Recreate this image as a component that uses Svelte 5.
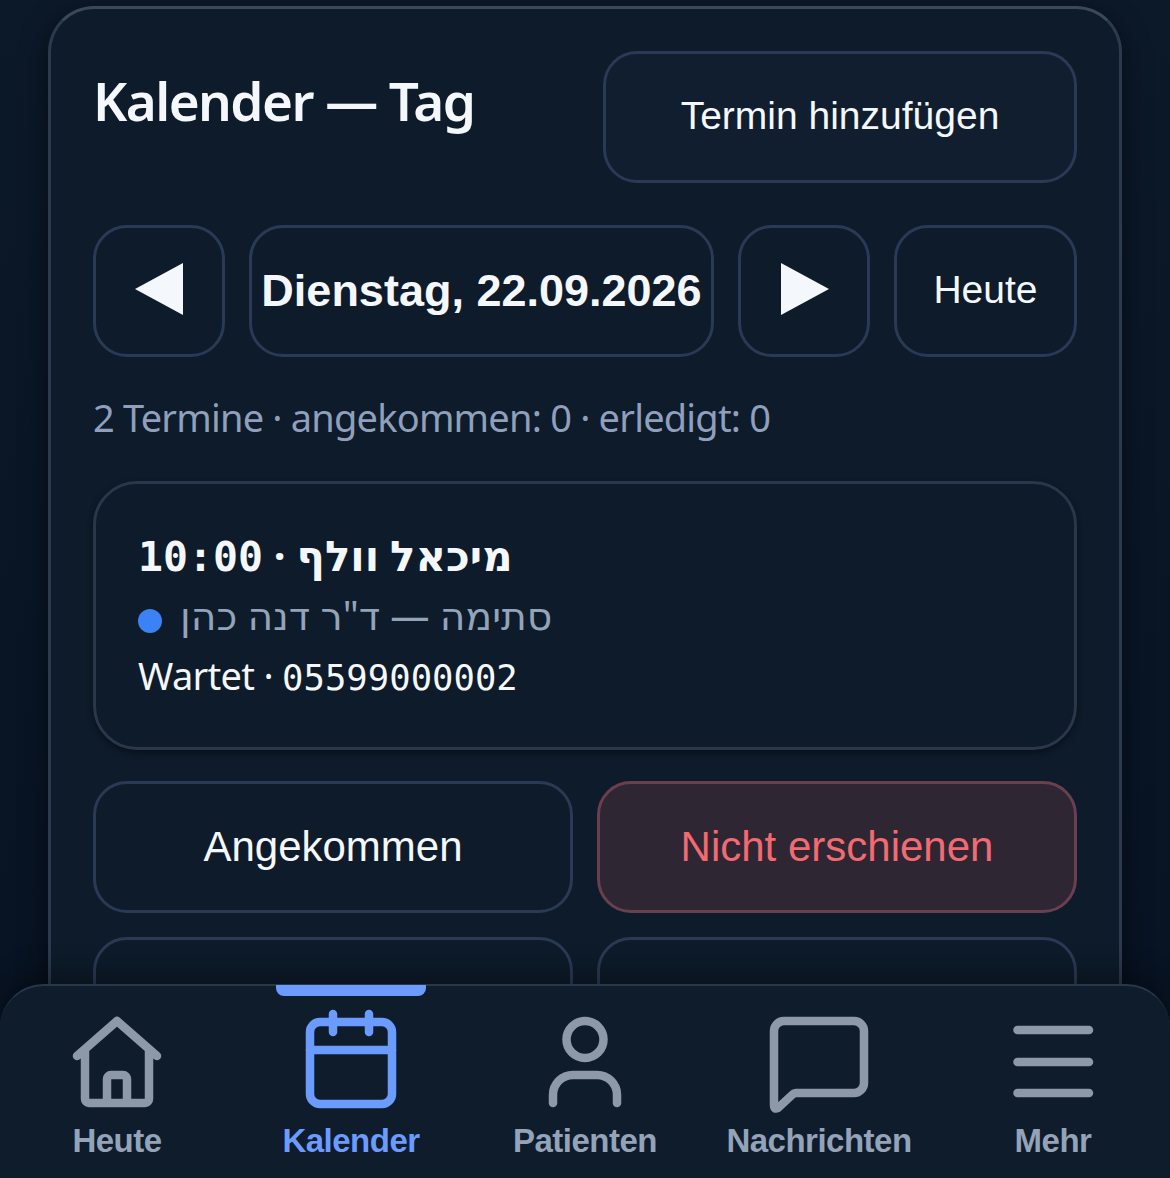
<script>
const tabs = ['Heute','Kalender','Patienten','Nachrichten','Mehr'];
</script>

<div class="page">
  <main class="card">
    <header class="head">
      <h1>Kalender — Tag</h1>
      <button class="btn add">Termin hinzufügen</button>
    </header>
    <div class="nav">
      <button class="btn sq" aria-label="zurück"><span class="tri left"></span></button>
      <button class="btn date">Dienstag, 22.09.2026</button>
      <button class="btn sq" aria-label="weiter"><span class="tri right"></span></button>
      <button class="btn today">Heute</button>
    </div>
    <p class="sum">2 Termine · angekommen: 0 · erledigt: 0</p>
    <section class="appt">
      <div class="l1"><span class="mono">10:00</span> · <bdi>מיכאל וולף</bdi></div>
      <div class="l2"><span class="dot"></span><bdi>סתימה — ד"ר דנה כהן</bdi></div>
      <div class="l3">Wartet · <span class="mono">05599000002</span></div>
    </section>
    <div class="actions">
      <button class="btn act">Angekommen</button>
      <button class="btn act danger">Nicht erschienen</button>
      <button class="btn act"></button>
      <button class="btn act"></button>
    </div>
  </main>
  <nav class="tabs">
    {#each tabs as t, i}
      <div class="tab" class:on={i===1}>
        {#if i===1}<span class="mark"></span>{/if}
        <svg viewBox="0 0 110 110" width="110" height="110" fill="none" stroke="currentColor" stroke-width="8.500" stroke-linecap="round" stroke-linejoin="round">
          {#if i===0}
            <path d="M15 48 55 13l40 35M23 42v49a4 4 0 0 0 4 4h56a4 4 0 0 0 4-4V42M45 95V71a4 4 0 0 1 4-4h12a4 4 0 0 1 4 4v24"/>
          {:else if i===1}
            <rect x="14" y="14" width="82" height="82" rx="10"/><path d="M14 42h82M37 6v18M73 6v18"/>
          {:else if i===2}
            <circle cx="55" cy="31.500" r="18.500"/><path d="M23 95v-8a20 20 0 0 1 20-20h24a20 20 0 0 1 20 20v8"/>
          {:else if i===3}
            <path d="M10 23a10 10 0 0 1 10-10h70a10 10 0 0 1 10 10v52a10 10 0 0 1-10 10H32a6 6 0 0 0-4 2L14 100q-4 2-4-3Z"/>
          {:else}
            <path d="M19.500 22H91M19.500 54H91M19.500 85H91"/>
          {/if}
        </svg>
        <span class="lbl">{t}</span>
      </div>
    {/each}
  </nav>
</div>

<style>
:global(body){margin:0;background:#0a1628;}
.page{width:1170px;height:1178px;position:relative;overflow:hidden;background:linear-gradient(180deg,#0c1929,#071222);font-family:"Liberation Sans",sans-serif;color:#fff;}
.card{width:1074px;height:1172px;box-sizing:border-box;margin:0 0 0 48px;position:relative;top:6px;padding:42px;border:3px solid #2c3a4d;border-top-color:#3a4859;border-radius:46px;background:#0d1b2a;box-shadow:0 8px 30px #0007;}
.head{display:flex;justify-content:space-between;align-items:flex-start;}
h1{margin:18px 0 0;font:600 53px/1.2 "Noto Sans",sans-serif;letter-spacing:-1.550px;color:#f4f7fb;}
.btn{box-sizing:border-box;height:132px;border:3px solid #2a3a55;border-radius:34px;background:#0d1b2a;color:#f4f7fb;font:39px "Liberation Sans",sans-serif;padding:0;}
.add{width:474px;background:#101e30;padding-bottom:2px;}
.nav{display:flex;gap:24px;margin-top:42px;}
.sq{width:132px;display:flex;align-items:center;justify-content:center;padding-bottom:4px;}
.tri{width:0;height:0;border-top:26px solid transparent;border-bottom:26px solid transparent;}
.left{border-right:48px solid #f4f7fb;}
.right{border-left:48px solid #f4f7fb;margin-left:1px;}
.date{flex:1;font-weight:700;font-size:45px;}
.today{width:183px;padding-bottom:2px;}
.sum{margin:37px 0 0;font:38px/46px "Noto Sans",sans-serif;letter-spacing:-.8px;color:#8f9fbc;}
.appt{margin-top:41px;height:269px;box-sizing:border-box;border:3px solid #2a3649;border-radius:44px;padding:43px 42px;background:#0d1b2a;box-shadow:0 3px 6px #0006;}
.l1{font:700 42px/56px "Noto Sans","DejaVu Sans",sans-serif;color:#f4f7fb;}
.mono{font-family:"DejaVu Sans Mono",monospace;}
.l1 .mono{font-size:41.500px;}
.l2{font:39.300px/60px "Noto Sans","DejaVu Sans",sans-serif;color:#94a3b8;display:flex;align-items:center;gap:18px;}
.dot{width:24px;height:24px;border-radius:50%;background:#3b82f6;margin-top:12px;}
.l3{font:38px/60px "Noto Sans",sans-serif;letter-spacing:-.7px;color:#f4f7fb;}
.l3 .mono{font-size:35.600px;letter-spacing:0;}
.actions{display:grid;grid-template-columns:1fr 1fr;gap:24px;margin-top:31px;}
.act{height:132px;font-size:42px;}
.danger{background:#2f2634;border-color:#6b3f4d;color:#f26a72;}
.tabs{position:absolute;left:0;right:0;bottom:0;height:194px;box-sizing:border-box;border-top:2px solid #2a3649;border-radius:44px 44px 0 0;background:#0e1c2c;box-shadow:0 -10px 30px #0005;display:grid;grid-template-columns:repeat(5,234px);}
.tab{position:relative;display:flex;flex-direction:column;align-items:center;color:#8d99a9;padding-top:22px;}
.lbl{font:700 33px/40px "Liberation Sans",sans-serif;letter-spacing:-.5px;margin-top:3px;color:#94a3b8;}
.on,.on .lbl{color:#6b9bff;}
.mark{position:absolute;top:-1px;left:42px;width:150px;height:11px;border-radius:0 0 8px 8px;background:#6b9bff;}
</style>
